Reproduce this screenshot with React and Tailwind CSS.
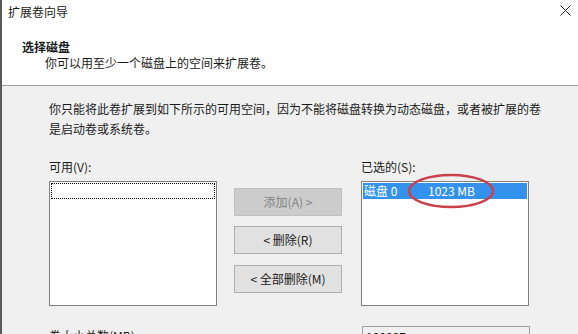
import React from 'react';

const FONT = { fontFamily: '"Noto Sans CJK SC", "Microsoft YaHei", sans-serif' };

function WinButton({ children, disabled }) {
  return (
    <div
      className={`h-[28px] w-[108px] flex items-center justify-center border text-[12px] leading-[16px] ${
        disabled
          ? 'bg-[#cccccc] border-[#bfbfbf] text-[#838383]'
          : 'bg-[#e1e1e1] border-[#adadad] text-[#1a1a1a]'
      }`}
    >
      {children}
    </div>
  );
}

export default function App() {
  return (
    <div
      className="w-[578px] h-[334px] overflow-hidden bg-[#f0f0f0] border-l-2 border-[#5a5a5a] text-[#1a1a1a]"
      style={FONT}
    >
      {/* Header */}
      <div className="relative h-[86px] bg-white border-b border-[#a0a0a0]">
        <div className="pl-[6px] pt-[2px] text-[12px] leading-[20px]">扩展卷向导</div>
        <svg
          className="absolute right-[7px] top-[5px]"
          width="11"
          height="11"
          viewBox="0 0 11 11"
        >
          <path d="M0.5 0.5 L10.5 10.5 M10.5 0.5 L0.5 10.5" stroke="#222" strokeWidth="1" />
        </svg>
        <div className="pl-[20px] mt-[17px] text-[12px] leading-[16px] font-bold">选择磁盘</div>
        <div className="pl-[43px] text-[12px] leading-[16px]">你可以用至少一个磁盘上的空间来扩展卷。</div>
      </div>

      {/* Body */}
      <div className="pl-[47px] pt-[13px] text-[12px] leading-[20px]">
        <p className="w-[500px]">
          你只能将此卷扩展到如下所示的可用空间，因为不能将磁盘转换为动态磁盘，或者被扩展的卷是启动卷或系统卷。
        </p>

        <div className="flex mt-[18px]">
          {/* Available */}
          <div className="w-[168px]">
            <div className="leading-[20px]">可用(V):</div>
            <div className="mt-[4px] h-[125px] bg-white border border-[#828282] p-[1px]">
              <div className="h-[16px] border border-dotted border-black" />
            </div>
          </div>

          {/* Buttons */}
          <div className="ml-[17px] pt-[31px] flex flex-col gap-[10px]">
            <WinButton disabled>添加(A) &gt;</WinButton>
            <WinButton>&lt; 删除(R)</WinButton>
            <div className="mt-[1px]">
              <WinButton>&lt; 全部删除(M)</WinButton>
            </div>
          </div>

          {/* Selected */}
          <div className="ml-[19px] w-[168px]">
            <div className="leading-[20px]">已选的(S):</div>
            <div className="relative mt-[4px] h-[125px] bg-white border border-[#828282] p-[1px]">
              <div className="h-[16px] bg-[#3392ee] text-white flex items-center text-[12px] leading-[16px]">
                <span className="w-[65px] pl-[1px]">磁盘 0</span>
                <span>1023 MB</span>
              </div>
              <svg
                className="absolute left-[44px] top-[-10px]"
                width="90"
                height="38"
                viewBox="0 0 90 38"
              >
                <ellipse cx="45" cy="19" rx="42" ry="16" fill="none" stroke="#c8414b" strokeWidth="2.5" />
              </svg>
            </div>
          </div>
        </div>

        <div className="flex mt-[20px]">
          <div className="w-[313px] leading-[20px]">卷大小总数(MB):</div>
          <div className="w-[168px] h-[22px] border border-[#a0a0a0] bg-[#f0f0f0] pl-[3px] leading-[20px]">
            100097
          </div>
        </div>
      </div>
    </div>
  );
}
